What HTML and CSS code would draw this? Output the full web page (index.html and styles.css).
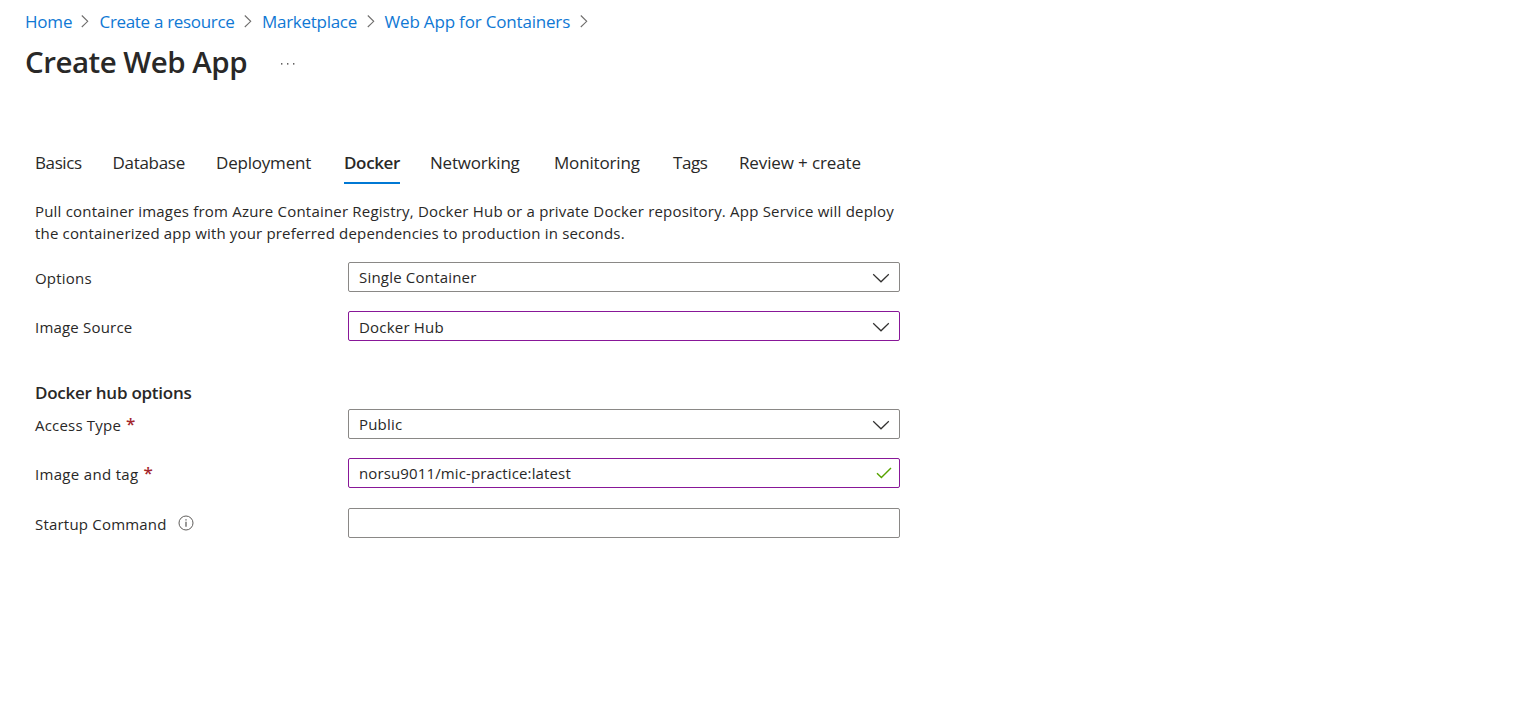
FILE: index.html
```html
<!DOCTYPE html>
<html lang="en">
<head>
<meta charset="utf-8">
<title>Create Web App</title>
<link rel="stylesheet" href="styles.css">
</head>
<body>
<svg width="0" height="0" class="defs" aria-hidden="true">
  <symbol id="sep" viewBox="0 0 8 14"><path d="M.8 1.5 6.7 7.3 .8 13" fill="none" stroke="#6f6e6d" stroke-width="1.1"/></symbol>
  <symbol id="down" viewBox="0 0 18 10"><path d="M1.2 1.2 9 8.8 16.8 1.2" fill="none" stroke="#323130" stroke-width="1.2"/></symbol>
</svg>
<header class="header">
  <nav class="crumbs" aria-label="Breadcrumb">
    <a class="crumb home">Home</a><svg class="sep"><use href="#sep"/></svg>
    <a class="crumb resource">Create a resource</a><svg class="sep"><use href="#sep"/></svg>
    <a class="crumb market">Marketplace</a><svg class="sep"><use href="#sep"/></svg>
    <a class="crumb webapp">Web App for Containers</a><svg class="sep"><use href="#sep"/></svg>
  </nav>
  <div class="title-row">
    <h1 class="title">Create Web App</h1>
    <svg class="more" viewBox="0 0 16 4" aria-label="More"><path d="M1 1.2h1.4v1.4H1zM7 1.2h1.4v1.4H7zM13 1.2h1.4v1.4H13z" fill="#323130"/></svg>
  </div>
</header>
<main class="content">
  <div class="tabs" role="tablist">
    <div class="tab"><span class="basics">Basics</span></div>
    <div class="tab"><span class="database">Database</span></div>
    <div class="tab"><span class="deployment">Deployment</span></div>
    <div class="tab active"><span class="docker">Docker</span></div>
    <div class="tab"><span class="networking">Networking</span></div>
    <div class="tab"><span class="monitoring">Monitoring</span></div>
    <div class="tab"><span class="tags">Tags</span></div>
    <div class="tab"><span class="review">Review + create</span></div>
  </div>
  <p class="intro"><span class="line-one">Pull container images from Azure Container Registry, Docker Hub or a private Docker repository. App Service will deploy</span><br><span class="line-two">the containerized app with your preferred dependencies to production in seconds.</span></p>
  <div class="form">
    <div class="row">
      <label class="label">Options</label>
      <div class="field"><span class="value">Single Container</span><svg class="down"><use href="#down"/></svg></div>
    </div>
    <div class="row">
      <label class="label">Image Source</label>
      <div class="field edited"><span class="value hub">Docker Hub</span><svg class="down"><use href="#down"/></svg></div>
    </div>
    <h2 class="section">Docker hub options</h2>
    <div class="row">
      <label class="label"><span>Access Type</span><span class="required">*</span></label>
      <div class="field"><span class="value">Public</span><svg class="down"><use href="#down"/></svg></div>
    </div>
    <div class="row">
      <label class="label"><span class="image-tag">Image and tag</span><span class="required">*</span></label>
      <div class="field edited"><span class="value image">norsu9011/mic-practice:latest</span><svg class="check" viewBox="0 0 16 12"><path d="M1 6.2 5.4 10.6 15 1" fill="none" stroke="#57a300" stroke-width="1.4"/></svg></div>
    </div>
    <div class="row">
      <label class="label"><span>Startup Command</span><svg class="info" viewBox="0 0 16 16"><circle cx="8" cy="8" r="7" fill="none" stroke="#605e5c"/><path d="M8 6.7v5M8 4.2v1.2" stroke="#484644" stroke-width="1.1"/></svg></label>
      <div class="field"></div>
    </div>
  </div>
</main>
</body>
</html>
```
FILE: styles.css
```css
* { box-sizing: border-box; }
body {
  margin: 0;
  background: #fff;
  color: #292827;
  font-family: "Open Sans", "Noto Sans", sans-serif;
  font-size: 15px;
  letter-spacing: .2px;
  white-space: nowrap;
}
.defs { display: block; }
.header { padding: 9px 25px 0; height: 142px; }
.crumbs {
  display: grid;
  grid-template-columns: 56px 18.5px 144px 18.5px 105px 17.5px 195px 18px;
  align-items: center;
  height: 24px;
  font-size: 17px;
}
.crumb { color: #0f78d4; }
.home { letter-spacing: -.2px; }
.resource { letter-spacing: -.32px; }
.market { letter-spacing: -.28px; }
.webapp { letter-spacing: -.18px; }
.sep { width: 8px; height: 14px; }
.title-row { display: flex; align-items: center; gap: 33px; height: 44px; margin-top: 7px; }
.title { width: 222px; margin: 0; font-size: 29.5px; line-height: 44px; font-weight: 600; letter-spacing: -.5px; }
.more { width: 16px; height: 4px; margin-top: 4px; }
.content { width: 900px; padding-left: 35px; }
.tabs {
  display: grid;
  grid-template-columns: 77.5px 103.5px 128px 86px 124px 119px 66px 122px;
  height: 43px;
  font-size: 17px;
  line-height: 42px;
}
.basics { letter-spacing: -.4px; }
.database { letter-spacing: -.3px; }
.deployment { letter-spacing: -.2px; }
.docker { letter-spacing: -.35px; }
.networking { letter-spacing: -.2px; }
.monitoring { letter-spacing: -.17px; }
.tags { letter-spacing: -.45px; }
.review { letter-spacing: -.12px; }
.active { width: 56px; height: 42px; border-bottom: 2.5px solid #0078d4; font-weight: 600; }
.intro { margin: 15px 0 0; line-height: 22px; }
.line-two { letter-spacing: .17px; }
.form { display: grid; row-gap: 19.4px; margin-top: 18px; }
.row { display: grid; grid-template-columns: 313px 552px; height: 30px; align-items: center; }
.label { display: flex; align-items: center; padding-top: 2px; }
.field {
  display: flex;
  align-items: center;
  justify-content: space-between;
  height: 30px;
  padding: 0 9px 0 10px;
  border: 1px solid #8a8886;
  border-radius: 2px;
}
.edited { border-color: #881798; }
.hub { padding-top: 1px; }
.image { letter-spacing: .13px; }
.image-tag { letter-spacing: .32px; }
.down { width: 18px; height: 10px; margin-top: 2px; }
.check { width: 16px; height: 12px; margin-right: -2px; }
.section { margin: 20.3px 0 -15.75px; font-size: 17px; line-height: 24px; font-weight: 600; letter-spacing: -.25px; }
.required { margin-left: 5px; color: #a4262c; font-size: 17px; font-weight: 600; line-height: 20px; margin-top: -2px; }
.info { width: 16px; height: 16px; margin-left: 11px; margin-top: -1px; }
```
